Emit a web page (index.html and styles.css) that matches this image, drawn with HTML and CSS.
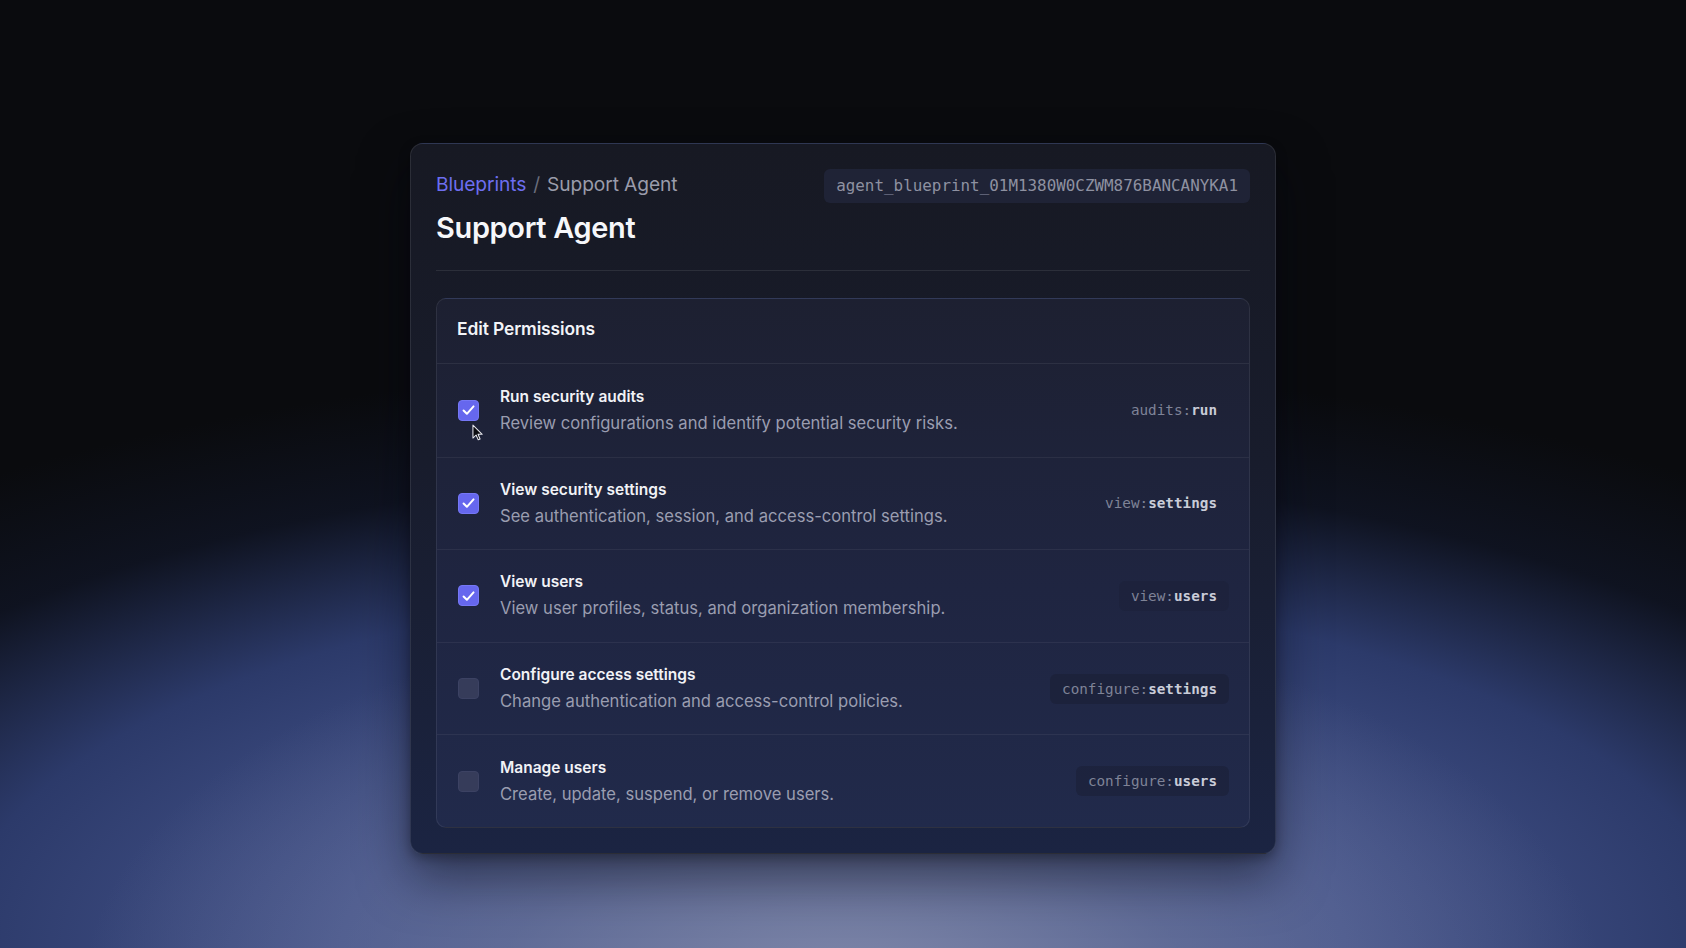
FILE: index.html
```html
<!DOCTYPE html>
<html lang="en">
<head>
<meta charset="utf-8">
<title>Support Agent</title>
<link rel="stylesheet" href="styles.css">
</head>
<body>
<main class="stage">
  <section class="card">
    <header class="card-head">
      <div class="head-text">
        <nav class="crumbs"><a class="crumb-link">Blueprints</a><span class="crumb-sep">/</span><span class="crumb-current">Support Agent</span></nav>
        <h1 class="title">Support Agent</h1>
      </div>
      <code class="id-chip">agent_blueprint_01M1380W0CZWM876BANCANYKA1</code>
    </header>
    <hr class="divider">
    <div class="panel">
      <div class="panel-head">Edit Permissions</div>
      <ul class="perm-list">
        <li class="perm">
          <span class="check on">
            <svg viewBox="0 0 20 20" class="tick"><path d="M4.8 10.5l3.5 3.5 7-7.8" /></svg>
            <svg viewBox="0 0 14 18" class="cursor"><path d="M1 1v14l3.4-3.3 2.3 5.2 2-.9-2.2-5.1H11z" /></svg>
          </span>
          <div class="perm-text">
            <div class="perm-title">Run security audits</div>
            <div class="perm-desc">Review configurations and identify potential security risks.</div>
          </div>
          <code class="scope"><span class="scope-ns">audits:</span><span class="scope-act">run</span></code>
        </li>
        <li class="perm">
          <span class="check on"><svg viewBox="0 0 20 20" class="tick"><path d="M4.8 10.5l3.5 3.5 7-7.8" /></svg></span>
          <div class="perm-text">
            <div class="perm-title">View security settings</div>
            <div class="perm-desc">See authentication, session, and access-control settings.</div>
          </div>
          <code class="scope"><span class="scope-ns">view:</span><span class="scope-act">settings</span></code>
        </li>
        <li class="perm">
          <span class="check on"><svg viewBox="0 0 20 20" class="tick"><path d="M4.8 10.5l3.5 3.5 7-7.8" /></svg></span>
          <div class="perm-text">
            <div class="perm-title">View users</div>
            <div class="perm-desc">View user profiles, status, and organization membership.</div>
          </div>
          <code class="scope chip faint"><span class="scope-ns">view:</span><span class="scope-act">users</span></code>
        </li>
        <li class="perm">
          <span class="check"></span>
          <div class="perm-text">
            <div class="perm-title">Configure access settings</div>
            <div class="perm-desc">Change authentication and access-control policies.</div>
          </div>
          <code class="scope chip"><span class="scope-ns">configure:</span><span class="scope-act">settings</span></code>
        </li>
        <li class="perm">
          <span class="check"></span>
          <div class="perm-text">
            <div class="perm-title">Manage users</div>
            <div class="perm-desc">Create, update, suspend, or remove users.</div>
          </div>
          <code class="scope chip"><span class="scope-ns">configure:</span><span class="scope-act">users</span></code>
        </li>
      </ul>
    </div>
  </section>
</main>
</body>
</html>
```

FILE: styles.css
```css
* { box-sizing: border-box; }
html, body { margin: 0; padding: 0; }
body {
  width: 1686px;
  height: 948px;
  overflow: hidden;
  font-family: Inter, "Noto Sans", sans-serif;
  color: #f2f3f7;
  background:
    radial-gradient(ellipse 45% 40% at 50% 104%, rgba(128,136,170,0.95) 0%, rgba(110,120,158,0.6) 45%, rgba(90,102,145,0) 100%),
    radial-gradient(ellipse 85% 62% at 50% 100%, #52608f 0%, #44538a 35%, #2c3a6a 62%, rgba(18,24,44,0.6) 82%, rgba(10,11,14,0) 100%),
    #0a0b0e;
}
.stage {
  display: flex;
  justify-content: center;
  padding-top: 143px;
}
.card {
  width: 866px;
  border: 1px solid rgba(255,255,255,0.09);
  border-radius: 13px;
  padding: 25px 25px 25px;
  background: linear-gradient(180deg, #171923 0%, #181c2c 45%, #1b2442 100%);
  box-shadow: 0 24px 50px rgba(5,8,20,0.5), 0 4px 12px rgba(0,0,0,0.3);
}
.card-head {
  display: flex;
  justify-content: space-between;
  align-items: flex-start;
}
.crumbs {
  display: flex;
  align-items: baseline;
  font-size: 19.2px;
  line-height: 30px;
  letter-spacing: -0.1px;
}
.crumb-link { color: #6d6ef0; }
.crumb-sep { color: #6a6d7c; margin: 0 7px; }
.crumb-current { color: #9a9cab; }
.title {
  margin: 11px 0 0;
  font-size: 28.9px;
  line-height: 36px;
  font-weight: 600;
  letter-spacing: -0.3px;
  color: #f6f7fa;
}
.id-chip {
  font-family: "DejaVu Sans Mono", "Liberation Mono", monospace;
  font-size: 15.9px;
  line-height: 34px;
  height: 34px;
  padding: 0 12px;
  border-radius: 6px;
  background: #1f2336;
  color: #8e91a1;
}
.divider {
  border: 0;
  height: 1px;
  background: rgba(255,255,255,0.09);
  margin: 24px 0 27px;
}
.panel {
  border: 1px solid rgba(255,255,255,0.08);
  border-radius: 10px;
  background: linear-gradient(180deg, #1d2031 0%, #1f2541 55%, #212a4b 100%);
  overflow: hidden;
}
.panel-head {
  height: 65px;
  padding: 0 20px 6px;
  display: flex;
  align-items: center;
  font-size: 17.4px;
  font-weight: 600;
  color: #f3f4f8;
  letter-spacing: -0.1px;
  border-bottom: 1px solid rgba(255,255,255,0.07);
}
.perm-list { list-style: none; margin: 0; padding: 0; }
.perm {
  height: 92.6px;
  display: flex;
  align-items: center;
  padding: 0 20px;
  border-top: 1px solid rgba(255,255,255,0.06);
}
.perm:first-child { border-top: 0; }
.check {
  position: relative;
  flex: none;
  width: 21px;
  height: 21px;
  border-radius: 4px;
  background: #363c5a;
  border: 1px solid #3c4263;
  margin-left: 1px;
  margin-right: 21px;
  display: flex;
  align-items: center;
  justify-content: center;
}
.check.on {
  background: #6667ee;
  border-color: #7577f5;
}
.tick { width: 20px; height: 20px; }
.tick path {
  fill: none;
  stroke: #ffffff;
  stroke-width: 2.1;
  stroke-linecap: round;
  stroke-linejoin: round;
}
.cursor {
  position: absolute;
  left: 13px;
  top: 23px;
  width: 13px;
  height: 17px;
}
.cursor path { fill: #0c0c10; stroke: #e8e8ee; stroke-width: 1.1; stroke-linejoin: round; }
.perm-text { flex: 1; min-width: 0; }
.perm-title {
  font-size: 15.5px;
  font-weight: 600;
  line-height: 22px;
  color: #f1f2f6;
}
.perm-desc {
  margin-top: 3px;
  font-size: 16.6px;
  line-height: 24px;
  color: #9a9db0;
}
.scope {
  font-family: "DejaVu Sans Mono", "Liberation Mono", monospace;
  font-size: 14.3px;
  line-height: 30px;
  height: 30px;
  padding: 0 12px;
  border-radius: 6px;
}
.scope.chip { background: rgba(24,27,46,0.38); }
.scope.chip.faint { background: rgba(24,27,46,0.22); }
.scope-ns { color: #7f8397; }
.scope-act { color: #c9ccd8; font-weight: 600; }
```
